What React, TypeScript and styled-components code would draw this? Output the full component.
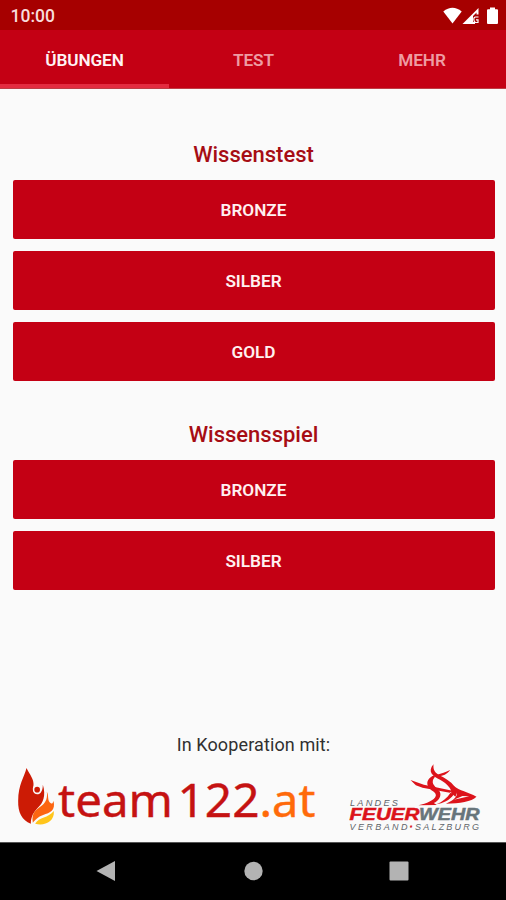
import React from "react";
import styled, { createGlobalStyle } from "styled-components";

const GlobalStyle = createGlobalStyle`
  * { box-sizing: border-box; }
  body { margin: 0; background: #fafafa; }
`;

const Screen = styled.div`
  width: 506px;
  height: 900px;
  display: flex;
  flex-direction: column;
  overflow: hidden;
  background: #fafafa;
  font-family: Roboto, "Liberation Sans", sans-serif;
`;

const StatusBar = styled.header`
  height: 30px;
  flex: none;
  display: flex;
  align-items: center;
  justify-content: space-between;
  padding: 1px 7px 0 10.5px;
  background: #a60000;
  color: #f8dcdc;
  font-size: 17.5px;
  font-weight: 500;
`;

const StatusIcons = styled.svg`
  width: 56px;
  height: 20px;
  display: block;
`;

const TabBar = styled.nav`
  height: 58.5px;
  flex: none;
  display: grid;
  grid-template-columns: 169px 169px 168px;
  background: #c40014;
  border-bottom: 1px solid #bf3d45;
`;

const Tab = styled.button<{ $active?: boolean }>`
  border: 0;
  border-bottom: 4px solid ${(p) => (p.$active ? "#e32c40" : "transparent")};
  padding: 6px 0 0;
  background: none;
  color: ${(p) => (p.$active ? "#fff4f4" : "#ee9ca3")};
  font: 600 17.2px Roboto, sans-serif;
  letter-spacing: -0.1px;
`;

const Content = styled.main`
  flex: 1;
  display: flex;
  flex-direction: column;
  padding: 51.5px 11.5px 0 12.5px;
`;

const Section = styled.section`
  display: flex;
  flex-direction: column;
  gap: 12.6px;
  margin-bottom: 39px;
`;

const Heading = styled.h2`
  margin: 0 0 -12.6px;
  height: 40px;
  line-height: 29px;
  text-align: center;
  color: #a60d14;
  font-size: 22px;
  font-weight: 500;
`;

const LevelButton = styled.button`
  height: 58.6px;
  border: 0;
  border-radius: 2px;
  padding: 1px 0 0;
  background: #c40014;
  color: #fff0f0;
  font: 600 17.2px Roboto, sans-serif;
`;

const Footer = styled.footer`
  margin-top: auto;
  height: 110px;
  display: flex;
  flex-direction: column;
`;

const Caption = styled.div`
  height: 25px;
  line-height: 25px;
  text-align: center;
  color: #303030;
  font-size: 18px;
  letter-spacing: 0.12px;
`;

const Logos = styled.div`
  display: flex;
  justify-content: space-between;
  padding: 5px 12px 0 2px;
`;

const TeamSvg = styled.svg`
  width: 306px;
  height: 68px;
`;

const FireSvg = styled.svg`
  width: 138px;
  height: 74px;
`;

const NavBar = styled.nav`
  height: 58.5px;
  flex: none;
  background: #000;
  border-top: 1px solid #555;
  display: flex;
  justify-content: space-between;
  align-items: center;
  padding: 0 96px 0 95px;
`;

const NavIcon = styled.svg`
  width: 22px;
  height: 22px;
  fill: #b3b3b3;
`;

const TeamLogo = () => (
  <TeamSvg viewBox="14.5 761 306 68" role="img" aria-label="team122.at">
    <g transform="translate(0 755) scale(.33333)">
      <path fill="#cc1b05" d="M78 36 C72 63 53 84 53 135 C52 169 64 193 91 203 C91 183 99 168 112 155 C128 141 137 118 127 86 C127 105 120 114 110 115 C99 114 94 104 99 88 C101 70 88 56 78 36Z" />
      <circle cx="110" cy="101" r="11.5" fill="#fafafa" />
      <circle cx="110" cy="101" r="8.5" fill="#cc1b05" />
      <path fill="#fc6511" d="M139 107 C146 119 139 133 151 142 C155 145 158 139 159 134 C166 164 149 169 128 177 C112 183 105 191 97 200 C91 167 111 159 126 147 C138 136 141 124 139 107Z" />
      <path fill="#ffc51b" d="M160 165 C163 198 130 211 104 203 C116 182 143 187 160 165Z" />
    </g>
    <g fontFamily="'Noto Sans', 'Open Sans', sans-serif" fontSize="46">
      <text x="57.5" y="815.5" fill="#c51212" stroke="#c51212" strokeWidth=".4" textLength="115" lengthAdjust="spacingAndGlyphs">team</text>
      <text x="177" y="815.5" fill="#c51212" stroke="#c51212" strokeWidth=".4" textLength="82" lengthAdjust="spacingAndGlyphs">122</text>
      <text x="259" y="815.5" fill="#ff6a0a" stroke="#ff6a0a" strokeWidth=".4" textLength="56" lengthAdjust="spacingAndGlyphs">.at</text>
    </g>
  </TeamSvg>
);

const FireLogo = () => (
  <FireSvg viewBox="344.5 761 138 74" role="img" aria-label="Landesfeuerwehrverband Salzburg">
    <g transform="translate(336 755) scale(.33333)" fill="#dc131b">
      <path d="M291 25 C290 38 292 48 306 56 C326 66 343 76 353 90 C362 102 362 110 357 122 L344 112 C346 98 332 84 312 72 C288 62 272 46 291 25Z" />
      <path d="M302 56 C315 53 327 49 341 42 C332 55 318 60 308 60Z" />
      <path d="M294 58 C276 64 268 78 275 92 C282 104 300 108 298 119 C294 133 270 142 246 148 L301 147 L292 141 C306 135 316 120 310 107 C304 96 286 88 289 74 C291 66 298 64 294 58Z" />
      <path d="M222 72 L262 86 L348 104 L340 110 L258 95 L238 88Z" />
      <path d="M352 90 C368 104 395 108 420 122 C405 137 370 142 328 143 C345 136 358 126 361 116Z" />
      <path d="M300 145 C318 142 340 134 352 115 L342 110 C332 126 318 137 300 145Z" />
      <path d="M352 131 L378 120 L398 121 L372 127Z" fill="#fafafa" />
    </g>
    <g fontFamily="'Liberation Sans', Arial, sans-serif" fontStyle="italic">
      <text x="349.5" y="805.4" fontSize="9.2" fill="#606469" textLength="48" lengthAdjust="spacing">LANDES</text>
      <g fontSize="17.3" fontWeight="700" strokeWidth=".5">
        <text x="349" y="819.3" fill="#dc131b" stroke="#dc131b" textLength="70" lengthAdjust="spacingAndGlyphs">FEUER</text>
        <text x="418.5" y="819.3" fill="#68757b" stroke="#68757b" textLength="60.5" lengthAdjust="spacingAndGlyphs">WEHR</text>
      </g>
      <g fontSize="9" fill="#606469">
        <text x="349" y="829.3" textLength="58" lengthAdjust="spacing">VERBAND</text>
        <text x="409" y="829.3" fill="#dc131b" stroke="#dc131b" strokeWidth=".6" fontWeight="700">·</text>
        <text x="414.5" y="829.3" textLength="64" lengthAdjust="spacing">SALZBURG</text>
      </g>
    </g>
  </FireSvg>
);

const groups = [
  { title: "Wissenstest", levels: ["BRONZE", "SILBER", "GOLD"] },
  { title: "Wissensspiel", levels: ["BRONZE", "SILBER"] },
];

export default function App() {
  return (
    <>
      <GlobalStyle />
      <Screen>
        <StatusBar>
          <span>10:00</span>
          <StatusIcons viewBox="443 5 56 20" fill="#fff">
            <path d="M443.3 10.5 Q452.5 3 461.7 10.5 L452.5 22.5Z" />
            <path fillRule="evenodd" d="M462.5 23 L478.5 7 V13.5 H476.5 V11.5 L473 15 V21 H475 V23Z" />
            <path d="M478.5 16 H475.5 Q473.8 16 473.8 18.3 T475.5 21.5 H478 V18.8 H476" fill="none" stroke="#fff" strokeWidth="1.2" />
            <path d="M490 6.5 H495 V8.3 H497 Q498 8.3 498 9.3 V22 Q498 23 497 23 H488 Q487 23 487 22 V9.3 Q487 8.3 488 8.3 H490Z" />
          </StatusIcons>
        </StatusBar>
        <TabBar>
          <Tab $active>ÜBUNGEN</Tab>
          <Tab>TEST</Tab>
          <Tab>MEHR</Tab>
        </TabBar>
        <Content>
          {groups.map((g) => (
            <Section key={g.title}>
              <Heading>{g.title}</Heading>
              {g.levels.map((l) => (
                <LevelButton key={l}>{l}</LevelButton>
              ))}
            </Section>
          ))}
          <Footer>
            <Caption>In Kooperation mit:</Caption>
            <Logos>
              <TeamLogo />
              <FireLogo />
            </Logos>
          </Footer>
        </Content>
        <NavBar>
          <NavIcon viewBox="0 0 22 22"><path d="M1.5 11 L20 1 V21Z" /></NavIcon>
          <NavIcon viewBox="0 0 22 22"><circle cx="11.5" cy="11" r="9.2" /></NavIcon>
          <NavIcon viewBox="0 0 22 22"><rect x="1.5" y="1.5" width="19" height="19" rx="1" /></NavIcon>
        </NavBar>
      </Screen>
    </>
  );
}
